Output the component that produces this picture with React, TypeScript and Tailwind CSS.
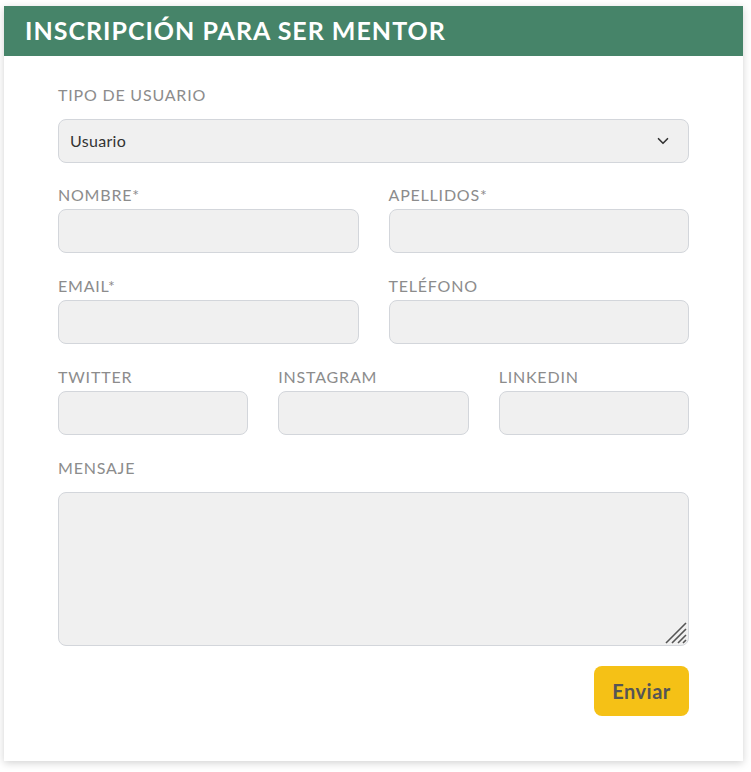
import { ChevronDown } from 'lucide-react'

const font = { fontFamily: 'Lato, "Open Sans", sans-serif' }

function Field({ label, className = '' }: { label: string; className?: string }) {
  return (
    <div className={`flex flex-col ${className}`}>
      <label className="text-[16px] leading-[24px] tracking-[0.8px] text-[#8c8c8c] uppercase">{label}</label>
      <input
        type="text"
        className="mt-[2px] h-[44px] w-full rounded-[8px] border border-[#d3d6db] bg-[#f0f0f0] px-3 text-[16px] text-[#333] outline-none"
      />
    </div>
  )
}

export default function App() {
  return (
    <div className="min-h-screen bg-white" style={font}>
      <div className="ml-[4px] mt-[6px] w-[739px] bg-white shadow-[0_2px_8px_rgba(0,0,0,0.18)]">
        <div className="flex h-[50px] items-center bg-[#468469] pl-[21px]">
          <h1 className="text-[25px] font-bold tracking-[1px] text-white">INSCRIPCIÓN PARA SER MENTOR</h1>
        </div>

        <form className="flex flex-col px-[54px] pb-[45px] pt-[27px]">
          <label className="text-[16px] leading-[24px] tracking-[0.8px] text-[#8c8c8c] uppercase">Tipo de usuario</label>
          <div className="relative mt-[12px]">
            <select className="h-[44px] w-full appearance-none rounded-[8px] border border-[#d3d6db] bg-[#f0f0f0] px-[11px] text-[16px] tracking-[0.3px] text-[#333] outline-none">
              <option>Usuario</option>
            </select>
            <ChevronDown
              size={18}
              strokeWidth={2.2}
              className="pointer-events-none absolute right-[17px] top-[13px] text-[#333]"
            />
          </div>

          <div className="mt-[20px] grid grid-cols-2 gap-x-[30px]">
            <Field label="Nombre*" />
            <Field label="Apellidos*" />
          </div>

          <div className="mt-[21px] grid grid-cols-2 gap-x-[30px]">
            <Field label="Email*" />
            <Field label="Teléfono" />
          </div>

          <div className="mt-[21px] grid grid-cols-3 gap-x-[30px]">
            <Field label="Twitter" />
            <Field label="Instagram" />
            <Field label="Linkedin" />
          </div>

          <label className="mt-[21px] text-[16px] leading-[24px] tracking-[0.8px] text-[#8c8c8c] uppercase">Mensaje</label>
          <div className="relative mt-[12px]">
            <textarea className="block h-[154px] w-full resize-none rounded-[8px] border border-[#d3d6db] bg-[#f0f0f0] px-3 py-2 text-[16px] text-[#333] outline-none" />
            <svg
              width="22"
              height="22"
              viewBox="0 0 22 22"
              className="pointer-events-none absolute bottom-[2px] right-[2px] text-[#555]"
            >
              <path d="M1 21 L21 1 M7 21 L21 7 M13 21 L21 13 M18 21 L21 18" stroke="currentColor" strokeWidth="1.6" />
            </svg>
          </div>

          <div className="mt-[20px] flex justify-end">
            <button
              type="button"
              className="h-[50px] w-[95px] rounded-[8px] bg-[#f5c116] text-[20px] font-bold tracking-[0.5px] text-[#555]"
            >
              Enviar
            </button>
          </div>
        </form>
      </div>
    </div>
  )
}
